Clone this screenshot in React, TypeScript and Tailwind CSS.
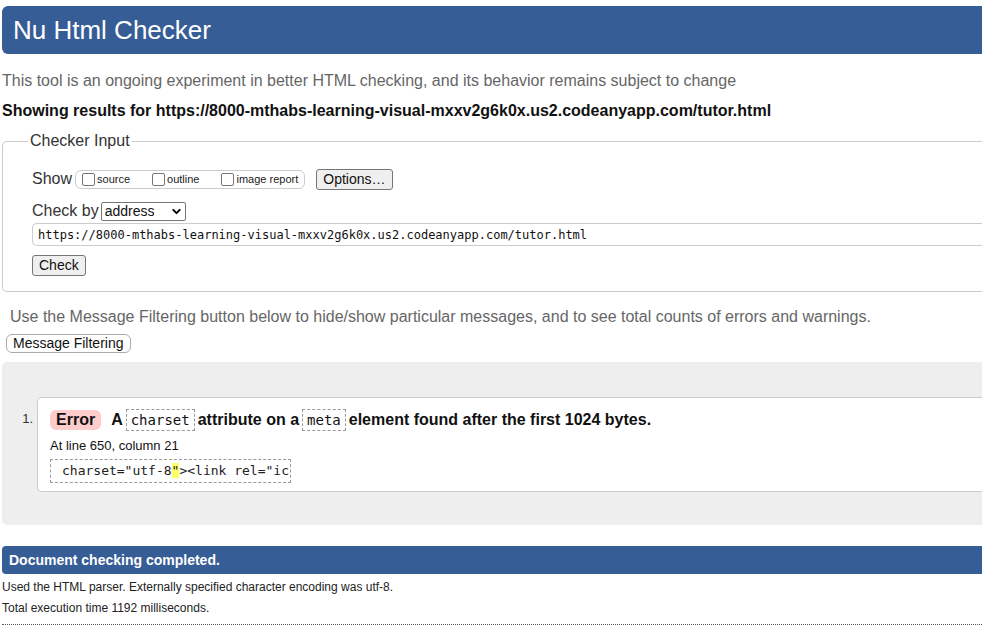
import { ChevronDown } from "lucide-react"

const sans = "font-['Liberation_Sans',Arial,sans-serif]"
const mono = "font-['DejaVu_Sans_Mono',monospace]"

function Box({ label }: { label: string }) {
  return (
    <span className="flex items-center">
      <span className="mr-[2px] h-[13px] w-[13px] rounded-[2px] border border-[#767676] bg-white" />
      <span className="text-[11px] text-[#222]">{label}</span>
    </span>
  )
}

function Btn({ children, className = "" }: { children: React.ReactNode; className?: string }) {
  return (
    <span
      className={`inline-flex items-center rounded-[3px] border border-[#767676] bg-[#efefef] px-[6px] text-[#111] ${className}`}
    >
      {children}
    </span>
  )
}

function Code({ children }: { children: React.ReactNode }) {
  return (
    <span className={`mx-[3px] inline-block border border-dashed border-[#999] px-[4px] py-[1px] text-[14px] font-normal leading-[18px] ${mono}`}>
      {children}
    </span>
  )
}

export default function App() {
  return (
    <div className={`h-[625px] w-[982px] overflow-hidden bg-white ${sans}`}>
      <div className="w-[1200px] pl-[2px] pt-[6px]">
        <h1 className="flex h-[48px] items-center rounded-l-[6px] bg-[#365d95] pl-[11px] text-[26px] text-white">
          Nu Html Checker
        </h1>

        <p className="mt-[17px] text-[16px] leading-[20px] text-[#666]">
          This tool is an ongoing experiment in better HTML checking, and its behavior remains subject to change
        </p>
        <p className="mt-[10px] text-[16px] font-bold leading-[20px] text-[#111]">
          Showing results for https://8000-mthabs-learning-visual-mxxv2g6k0x.us2.codeanyapp.com/tutor.html
        </p>

        {/* checker input fieldset */}
        <div className="relative mt-[20px] h-[151px] rounded-l-[5px] border border-r-0 border-[#ccc]">
          <span className="absolute left-[25px] top-[-11px] bg-white px-[2px] text-[16px] leading-[20px] text-[#333]">
            Checker Input
          </span>
          <div className="flex flex-col pl-[29px] pt-[26px]">
            <div className="flex h-[22px] items-center">
              <span className="text-[16px] text-[#333]">Show</span>
              <span className="ml-[3px] flex h-[19px] items-center gap-[22px] rounded-[6px] border border-[#ccc] pl-[6px] pr-[6px]">
                <Box label="source" />
                <Box label="outline" />
                <Box label="image report" />
              </span>
              <Btn className="ml-[11px] h-[21px] text-[14px]">Options…</Btn>
            </div>
            <div className="mt-[11px] flex h-[20px] items-center">
              <span className="text-[16px] text-[#333]">Check by</span>
              <span className="ml-[2px] flex h-[19px] w-[85px] items-center justify-between rounded-[2px] border border-[#767676] pl-[3px] pr-[2px] text-[14px] text-[#111]">
                address
                <ChevronDown size={13} strokeWidth={3.5} className="text-black" />
              </span>
            </div>
            <div className={`mt-[2px] flex h-[23px] items-center rounded-l-[5px] border border-r-0 border-[#ccc] pl-[5px] text-[12px] text-[#111] ${mono}`}>
              https://8000-mthabs-learning-visual-mxxv2g6k0x.us2.codeanyapp.com/tutor.html
            </div>
            <div className="mt-[7px]">
              <Btn className="h-[21px] text-[14px]">Check</Btn>
            </div>
          </div>
        </div>

        <p className="mt-[15px] pl-[8px] text-[16px] leading-[20px] text-[#666]">
          Use the Message Filtering button below to hide/show particular messages, and to see total counts of errors and warnings.
        </p>
        <div className="mt-[4px] pl-[4px]">
          <span className="inline-flex h-[19px] items-center rounded-[6px] border border-[#aaa] px-[6px] text-[14px] text-[#111]">
            Message Filtering
          </span>
        </div>

        {/* results */}
        <div className="mt-[7px] h-[163px] rounded-l-[5px] bg-[#eee] pt-[35px]">
          <ol className="flex">
            <li className="flex w-full">
              <span className="w-[35px] pr-[4px] pt-[12px] text-right text-[13px] text-[#333]">1.</span>
              <div className="h-[95px] flex-1 rounded-l-[5px] border border-r-0 border-[#ccc] bg-white pl-[12px] pt-[10px]">
                <div className="flex items-center text-[16px] font-bold text-[#111]">
                  <span className="mr-[10px] rounded-[6px] bg-[#fcc] px-[6px] leading-[20px]">Error</span>
                  A<Code>charset</Code>attribute on a<Code>meta</Code>element found after the first 1024 bytes.
                </div>
                <p className="mt-[6px] text-[13px] leading-[16px] text-[#111]">At line 650, column 21</p>
                <div
                  className={`mt-[5px] inline-block h-[24px] border border-dashed border-[#999] pl-[11px] pr-[1px] text-[13px] leading-[22px] text-[#222] ${mono}`}
                >
                  charset="utf-8<span className="bg-[#ff6]">"</span>&gt;&lt;link rel="ic
                </div>
              </div>
            </li>
          </ol>
        </div>

        <div className="mt-[21px] flex h-[28px] items-center rounded-l-[4px] bg-[#365d95] pl-[7px] text-[14px] font-bold text-white">
          Document checking completed.
        </div>
        <p className="mt-[5px] text-[12px] leading-[16px] text-[#222]">
          Used the HTML parser. Externally specified character encoding was utf-8.
        </p>
        <p className="mt-[5px] text-[12px] leading-[16px] text-[#222]">Total execution time 1192 milliseconds.</p>
        <div className="mt-[8px] border-t border-dotted border-[#555]" />
      </div>
    </div>
  )
}
